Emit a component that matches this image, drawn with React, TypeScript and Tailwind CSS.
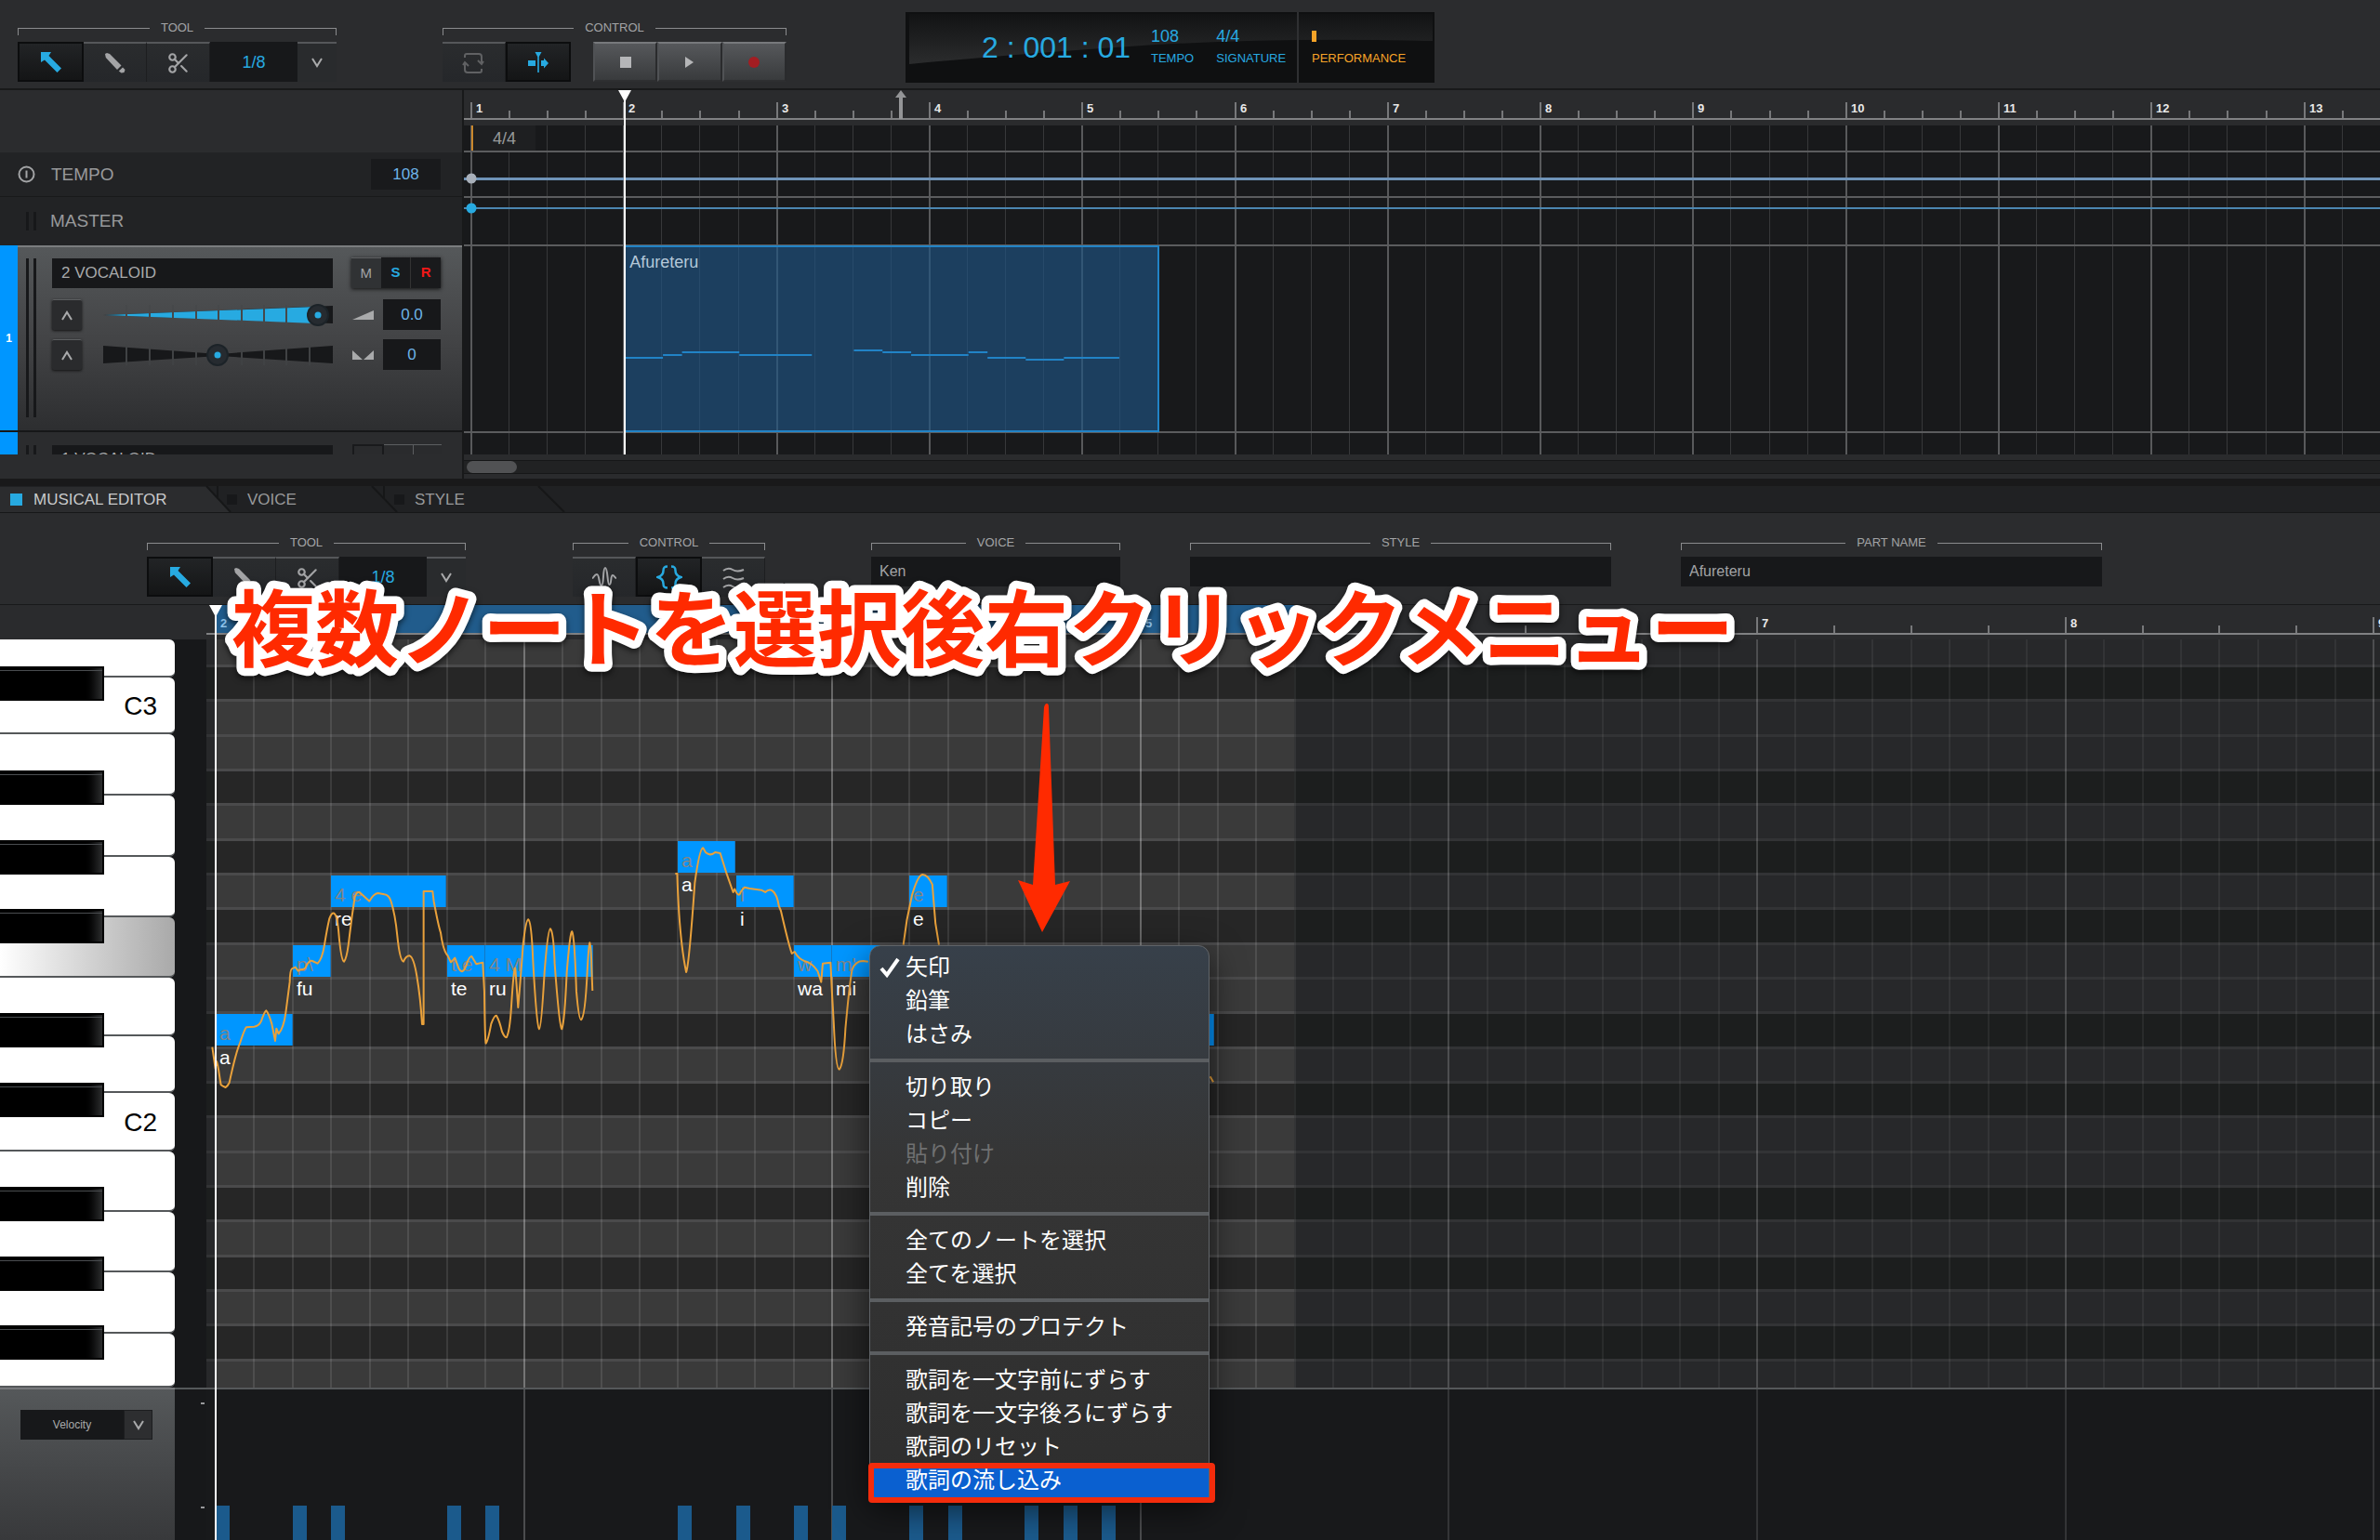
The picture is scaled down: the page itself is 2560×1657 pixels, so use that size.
import { ReactNode } from 'react';
import { Scissors } from 'lucide-react';

const BAR = 164.3;
const EIGHTH = 41.45;
const ROW = 112 / 3;
const ROLL_TOP = 29;
const BLACK_ROWS = [0, 3, 5, 7, 10, 12, 15, 17, 19];

const ROW_INDEXES = Array.from({ length: 22 }, (_, i) => i - 1);

interface Note {
    start: number;
    length: number;
    row: number;
    lyric: string;
    phoneme: string;
}

const notes: Note[] = [
    { start: 0, length: 2, row: 10, lyric: 'a', phoneme: 'a' },
    { start: 2, length: 1, row: 8, lyric: 'fu', phoneme: 'p\\' },
    { start: 3, length: 3, row: 6, lyric: 're', phoneme: '4 e' },
    { start: 6, length: 1, row: 8, lyric: 'te', phoneme: 't e' },
    { start: 7, length: 2.8, row: 8, lyric: 'ru', phoneme: '4 M' },
    { start: 12, length: 1.5, row: 5, lyric: 'a', phoneme: 'a' },
    { start: 13.5, length: 1.5, row: 6, lyric: 'i', phoneme: 'i' },
    { start: 15, length: 1, row: 8, lyric: 'wa', phoneme: 'w' },
    { start: 16, length: 2, row: 8, lyric: 'mi', phoneme: "m'" },
    { start: 18, length: 1, row: 6, lyric: 'e', phoneme: 'e' },
    { start: 23, length: 2.93, row: 10, lyric: '', phoneme: '' },
];

const velocities = [0, 2, 3, 6, 7, 12, 13.5, 15, 16, 18, 19, 21, 22, 23];

// start, end (eighths), y inside the part
const partNotes = [
    [0, 2, 121],
    [2, 3, 118],
    [3, 6, 115],
    [6, 9.8, 118],
    [12, 13.5, 113],
    [13.5, 15, 115],
    [15, 18, 118],
    [18, 19, 115],
    [19, 21, 121],
    [21, 23, 123],
    [23, 25.9, 121],
];

const whiteKeys = [
    { name: 'D3', height: 41 },
    { name: 'C3', height: 61 },
    { name: 'B2', height: 66 },
    { name: 'A2', height: 66 },
    { name: 'G2', height: 65 },
    { name: 'F2', height: 65 },
    { name: 'E2', height: 63 },
    { name: 'D2', height: 61 },
    { name: 'C2', height: 63 },
    { name: 'B1', height: 65 },
    { name: 'A1', height: 65 },
    { name: 'G1', height: 66 },
    { name: 'F1', height: 58 },
];

const menuGroups = [
    ['矢印', '鉛筆', 'はさみ'],
    ['切り取り', 'コピー', '貼り付け', '削除'],
    ['全てのノートを選択', '全てを選択'],
    ['発音記号のプロテクト'],
    [
        '歌詞を一文字前にずらす',
        '歌詞を一文字後ろにずらす',
        '歌詞のリセット',
        '歌詞の流し込み',
    ],
];

/* ---------- icons ---------- */

function ArrowIcon() {
    return (
        <svg width="22" height="22" viewBox="0 0 22 22" fill="#27aae1">
            <path d="M0 0H11L8.5 4L22 17.5L17.500 22L4 8.500L0 11Z" />
        </svg>
    );
}

function PencilIcon() {
    return (
        <svg width="22" height="22" viewBox="0 0 22 22" fill="#a3a4a6">
            <path d="M0 1L2 0L5 1L17.500 13.500L13 18L.8 5Z" />
            <path d="M19 15.500L21.500 18L20.500 21L17.500 21.500L14.800 19.500Z" />
        </svg>
    );
}

function LoopIcon() {
    return (
        <svg width="24" height="24" viewBox="0 0 24 24" fill="none" stroke="#606163" strokeWidth="2">
            <path d="M3 6V4Q3 2 5 2H18Q21 2 21 5V12" />
            <path d="M21 18V20Q21 22 19 22H6Q3 22 3 19V12" />
            <path d="M17 9L21 13L23 10M1 14L3 11L7 15" />
        </svg>
    );
}

function FollowIcon() {
    return (
        <svg width="24" height="24" viewBox="0 0 24 24" fill="#27aae1">
            <path d="M8.500 1H15.500L12.800 6V23H11.200V6Z" />
            <path d="M1 10H9V16H1ZM15 10H18V7.500L23 13L18 18.500V16H15Z" />
        </svg>
    );
}

function WaveIcon() {
    return (
        <svg width="26" height="24" viewBox="0 0 26 24" fill="none" stroke="#a3a4a6" strokeWidth="2">
            <path d="M0 12C2 12 2 8 5 8C8 8 7 20 10 20C13 20 11 1 14 1C17 1 16 19 18.500 19C21 19 19.500 9 22 9C24 9 24 12 26 12" />
        </svg>
    );
}

function BracesIcon() {
    return (
        <svg width="28" height="26" viewBox="0 0 28 26" fill="none" stroke="#27aae1" strokeWidth="2.500">
            <path d="M12 1.500C8 1.500 7.500 3 7.500 6C7.500 10 5 12 1.500 13C5 14 7.500 16 7.500 20C7.500 23 8 24.500 12 24.500" />
            <path d="M16 1.500C20 1.500 20.500 3 20.500 6C20.500 10 23 12 26.500 13C23 14 20.500 16 20.500 20C20.500 23 20 24.500 16 24.500" />
        </svg>
    );
}

function WavesIcon() {
    return (
        <svg width="24" height="24" viewBox="0 0 24 24" fill="none" stroke="#a3a4a6" strokeWidth="2">
            <path d="M1 4Q6 0 11 3T23 3M1 13Q6 9 11 12T23 12M1 22Q6 18 11 21T23 21" />
        </svg>
    );
}

function Chevron({ up = false }: { up?: boolean }) {
    return (
        <svg width="12" height="11" viewBox="0 0 12 11" fill="none" stroke="#a9aaab" strokeWidth="2">
            <path d={up ? 'M1 10L6 2L11 10' : 'M1 1L6 9L11 1'} />
        </svg>
    );
}

/* ---------- toolbar pieces ---------- */

function Group({ label, className, children }: { label: string; className: string; children: ReactNode }) {
    return (
        <section className={className} aria-label={label}>
            <div className="flex h-[18px] items-center gap-3">
                <div className="mt-2 h-2 flex-1 border-t border-l border-[#8a8b8d]" />
                <span className="text-[13px] leading-[18px] text-[#a3a4a6]">{label}</span>
                <div className="mt-2 h-2 flex-1 border-t border-r border-[#8a8b8d]" />
            </div>
            <div className="mt-[6px] flex">{children}</div>
        </section>
    );
}

function ToolButton({ label, active = false, children }: { label: string; active?: boolean; children: ReactNode }) {
    return (
        <button
            aria-label={label}
            className={
                active
                    ? 'flex h-[43px] flex-1 items-center justify-center border-2 border-[#0c0d0e] bg-linear-to-b from-[#222426] to-[#141516]'
                    : 'flex h-[43px] flex-1 items-center justify-center border-t-2 border-r border-t-[#55575a] border-r-[#1d1e20] bg-linear-to-b from-[#2a2c2e] to-[#25272a]'
            }
        >
            {children}
        </button>
    );
}

function TransportButton({ label, children }: { label: string; children: ReactNode }) {
    return (
        <button
            aria-label={label}
            className="flex h-[43px] flex-1 items-center justify-center border-2 border-t-[#77797c] border-r-[#2a2b2d] border-b-[#2e2f31] border-l-[#505255] bg-linear-to-b from-[#56585b] to-[#393b3d]"
        >
            {children}
        </button>
    );
}

function ToolGroup() {
    return (
        <Group label="TOOL" className="w-[343px]">
            <div className="flex w-[207px]">
                <ToolButton label="Arrow" active>
                    <ArrowIcon />
                </ToolButton>
                <ToolButton label="Pencil">
                    <PencilIcon />
                </ToolButton>
                <ToolButton label="Scissors">
                    <Scissors size={26} color="#a3a4a6" />
                </ToolButton>
            </div>
            <label className="relative flex h-[43px] flex-1">
                <select
                    aria-label="Quantize"
                    className="w-full appearance-none bg-[#17181a] pr-[42px] text-lg text-[#27aae1] [text-align-last:center]"
                >
                    <option>1/8</option>
                </select>
                <span className="pointer-events-none absolute inset-y-0 right-0 flex w-[42px] items-center justify-center border-t-2 border-[#55575a] bg-[#292b2d]">
                    <Chevron />
                </span>
            </label>
        </Group>
    );
}

function FieldGroup({ label, value, className }: { label: string; value: string; className: string }) {
    return (
        <Group label={label} className={className}>
            <input
                aria-label={label}
                defaultValue={value}
                className="h-8 w-full bg-[#17181a] px-[9px] text-base text-[#a3a4a6]"
            />
        </Group>
    );
}

function Lcd() {
    return (
        <div className="relative mt-[-8px] flex h-[76px] w-[569px] overflow-hidden bg-[#0f1011] text-[#27aae1]">
            <svg className="absolute inset-0 h-full w-full" viewBox="0 0 569 76" preserveAspectRatio="none">
                <defs>
                    <linearGradient id="gloss" x1="0" y1="0" x2="0" y2="1">
                        <stop offset="0" stopColor="#121314" />
                        <stop offset="1" stopColor="#2b2c2d" />
                    </linearGradient>
                </defs>
                <path d="M4 2H567V31Q380 27 240 37Q120 45 4 56Z" fill="url(#gloss)" />
            </svg>
            <div className="relative flex w-[423px] items-center border-r-2 border-[#2f3032] pl-[82px]">
                <span className="w-[182px] shrink-0 text-[32px] leading-9 whitespace-nowrap">2 : 001 : 01</span>
                <dl className="flex gap-6 text-[13px] leading-6">
                    <div className="flex flex-col-reverse">
                        <dt>TEMPO</dt>
                        <dd className="text-lg leading-6">108</dd>
                    </div>
                    <div className="flex flex-col-reverse">
                        <dt>SIGNATURE</dt>
                        <dd className="text-lg leading-6">4/4</dd>
                    </div>
                </dl>
            </div>
            <div className="relative flex flex-col justify-center pl-[14px] text-[#f7a428]">
                <div className="my-[6px] h-3 w-[5px] bg-[#f7a428]" />
                <span className="text-[13px] leading-6">PERFORMANCE</span>
            </div>
        </div>
    );
}

/* ---------- timelines ---------- */

interface RulerProps {
    offset: number;
    bar: number;
    first: number;
    count: number;
    part?: { from: number; to: number };
}

function Ruler({ offset, bar, first, count, part }: RulerProps) {
    return (
        <div className="relative h-[38px] overflow-hidden bg-[#2a2b2d]">
            {part && (
                <div
                    className="absolute top-0 h-[31px] bg-[#215c8c]"
                    style={{ left: part.from, width: part.to - part.from }}
                />
            )}
            <svg className="absolute inset-0 h-full w-full">
                {Array.from({ length: count * 4 }, (_, i) => {
                    const x = Math.round(offset + (i * bar) / 4);
                    const top = i % 4 === 0 ? 13 : 22;
                    const hidden = part && x < part.to && i % 4 !== 0;
                    return hidden ? null : (
                        <rect key={i} x={x - 1} y={top} width="2" height={31 - top} fill="#77787a" />
                    );
                })}
                <rect x="0" y="30" width="100%" height="2" fill="#808183" />
            </svg>
            {Array.from({ length: count }, (_, i) => {
                const x = Math.round(offset + i * bar);
                return (
                    <span
                        key={i}
                        className={
                            part && x < part.to
                                ? 'absolute top-3 text-[13px] leading-4 font-bold text-[#8fc3ea]'
                                : 'absolute top-3 text-[13px] leading-4 font-bold text-[#e8e8e8]'
                        }
                        style={{ left: x + 5 }}
                    >
                        {first + i}
                    </span>
                );
            })}
        </div>
    );
}

function Playhead({ left }: { left: number }) {
    return (
        <div className="pointer-events-none absolute inset-y-0 w-4" style={{ left }}>
            <svg width="16" height="18" viewBox="0 0 16 18" fill="#fff" className="absolute top-0 left-0">
                <path d="M1 0H15L9 11V18H7V11Z" />
            </svg>
            <div className="mx-auto h-full w-[2px] bg-white" />
        </div>
    );
}

function Arrangement() {
    return (
        <div className="relative min-w-0 flex-1 border-l-2 border-[#18191a]">
            <div className="relative">
                <Ruler offset={8} bar={BAR} first={1} count={13} />
                <svg className="absolute top-0 left-[464px]" width="12" height="31" viewBox="0 0 12 31" fill="#949597">
                    <path d="M6 0L12 8H8V31H4V8H0Z" />
                </svg>
                <div className="relative h-[354px] overflow-hidden bg-[#18191b]">
                    <svg className="absolute inset-0 h-full w-full">
                        {Array.from({ length: 53 }, (_, i) => (
                            <rect
                                key={i}
                                x={Math.round(7 + (i * BAR) / 4)}
                                y="0"
                                width={i % 4 === 0 ? 2 : 1}
                                height="100%"
                                fill={i % 4 === 0 ? '#58595b' : '#37383a'}
                            />
                        ))}
                        {[27, 76, 128, 329].map((y) => (
                            <rect key={y} x="0" y={y} width="100%" height="2" fill="#5b5c5e" />
                        ))}
                        <rect x="0" y="56" width="100%" height="3" fill="#6f93b8" />
                        <rect x="0" y="88" width="100%" height="2" fill="#4b86b0" />
                        <rect x="8" y="0" width="2" height="27" fill="#c8862b" />
                        <circle cx="8" cy="57" r="5.500" fill="#a9b0ba" />
                        <circle cx="8" cy="89" r="5.500" fill="#27aae1" />
                    </svg>
                    <span className="absolute top-0 left-[11px] flex h-[27px] w-[66px] items-center bg-[#1e1f21] pl-5 text-lg leading-6 text-[#98999b]">
                        4/4
                    </span>
                    <div
                        className="absolute top-[129px] h-[201px] overflow-hidden border-2 border-l-0 border-[#2183c6] bg-[#1e5584]/65"
                        style={{ left: 9 + BAR, width: 3.5 * BAR }}
                    >
                        <span className="block px-[5px] pt-1 text-lg leading-6 text-[#b4c8d9]">Afureteru</span>
                        <svg className="absolute inset-0 h-full w-full">
                            {partNotes.map(([from, to, y]) => (
                                <rect
                                    key={from}
                                    x={(from * BAR) / 8}
                                    y={y - 3}
                                    width={((to - from) * BAR) / 8}
                                    height="2"
                                    fill="#2183c6"
                                />
                            ))}
                        </svg>
                    </div>
                </div>
                <Playhead left={165} />
            </div>
            <div className="h-[26px] bg-[#2a2b2d] pt-[6px]">
                <div className="h-[15px] border-y border-[#161718] bg-[#212223] px-[3px]">
                    <div className="h-[13px] w-[54px] rounded-full bg-[#515254]" />
                </div>
            </div>
        </div>
    );
}

/* ---------- track list ---------- */

function VolumeSlider() {
    return (
        <div className="relative h-8 w-[248px]">
            <svg width="248" height="32" viewBox="0 0 248 32">
                <path d="M0 16L247 6V25Z" fill="#17181a" />
                <path d="M2 16L228 7V25Z" fill="#27aae1" />
                {[24, 49, 74, 99, 123, 148, 172, 196].map((x) => (
                    <rect key={x} x={x} y="5" width="2" height="22" fill="#46484a" />
                ))}
                <circle cx="231" cy="16" r="12" fill="#1c2328" />
                <circle cx="231" cy="16" r="10" fill="#262b30" />
                <circle cx="231" cy="16" r="3.500" fill="#27aae1" />
            </svg>
            <input type="range" aria-label="Volume" defaultValue={93} className="absolute inset-0 w-full opacity-0" />
        </div>
    );
}

function PanSlider() {
    return (
        <div className="relative h-8 w-[248px]">
            <svg width="248" height="32" viewBox="0 0 248 32">
                <path d="M0 6L124 15L247 6V25L124 17L0 25Z" fill="#17181a" />
                {[24, 49, 74, 99, 148, 172, 196, 221].map((x) => (
                    <rect key={x} x={x} y="5" width="2" height="22" fill="#404244" />
                ))}
                <circle cx="123" cy="16" r="12" fill="#1c2328" />
                <circle cx="123" cy="16" r="10" fill="#262b30" />
                <circle cx="123" cy="16" r="3.500" fill="#27aae1" />
            </svg>
            <input type="range" aria-label="Pan" className="absolute inset-0 w-full opacity-0" />
        </div>
    );
}

function ExpandButton({ label }: { label: string }) {
    return (
        <button
            aria-label={label}
            className="flex h-[33px] w-8 items-center justify-center rounded-xs border-t border-[#5c5e60] bg-[#2a2b2d] shadow-[0_1px_3px_#111]"
        >
            <Chevron up />
        </button>
    );
}

function ValueBox({ label, value }: { label: string; value: string }) {
    return (
        <input
            aria-label={label}
            defaultValue={value}
            className="h-[33px] w-[62px] bg-[#17181a] text-center text-[17px] text-[#6db3e8]"
        />
    );
}

function Meter({ className }: { className: string }) {
    return (
        <div className={className}>
            <div className="w-[3px] bg-[#17181a]" />
            <div className="w-[3px] bg-[#17181a]" />
        </div>
    );
}

function TrackList() {
    return (
        <div className="flex w-[497px] shrink-0 flex-col">
            <div className="h-[67px]" />
            <div className="flex h-12 items-center border-b border-[#18191a] bg-[#222325] pr-[23px] pl-[19px]">
                <svg width="19" height="19" viewBox="0 0 19 19" fill="none" stroke="#a3a4a6" strokeWidth="2">
                    <circle cx="9.500" cy="9.500" r="8" />
                    <path d="M9.500 5.500V13.500" />
                </svg>
                <span className="ml-[17px] flex-1 text-[19px] leading-6 text-[#98999b]">TEMPO</span>
                <input
                    aria-label="Tempo"
                    defaultValue="108"
                    className="h-[33px] w-[75px] bg-[#191a1c] text-center text-[17px] text-[#6db3e8]"
                />
            </div>
            <div className="flex h-[52px] items-center gap-[15px] bg-[#222325] pl-[28px]">
                <Meter className="flex h-5 w-[11px] gap-[5px]" />
                <span className="text-[19px] leading-6 text-[#98999b]">MASTER</span>
            </div>
            <div className="flex h-[201px] border-b-2 border-[#161718]">
                <div className="flex w-[19px] items-center justify-center bg-[#0096ff] text-xs font-bold text-white">
                    1
                </div>
                <div className="flex flex-1 border-t-2 border-[#7b7d7f] bg-linear-to-b from-[#55585a] via-[#434446] to-[#2d2e30] pr-[23px] pl-[9px]">
                    <Meter className="mt-3 flex h-[171px] w-[11px] gap-[5px]" />
                    <div className="ml-[17px] flex flex-1 flex-col pt-[11px]">
                        <div className="flex h-[33px] items-center justify-between">
                            <input
                                aria-label="Track name"
                                defaultValue="2 VOCALOID"
                                className="h-8 w-[302px] bg-[#17181a] px-[10px] text-[17px] text-[#a9aaab]"
                            />
                            <div className="flex h-[33px] w-[96px] text-[15px] shadow-[0_1px_4px_#111]">
                                <button className="flex-1 border-t border-[#5c5e60] bg-[#303234] text-[#a3a4a6]">
                                    M
                                </button>
                                <button className="flex-1 border-r border-[#333] bg-[#191a1c] font-bold text-[#27aae1]">
                                    S
                                </button>
                                <button className="flex-1 bg-[#191a1c] font-bold text-[#f01818]">R</button>
                            </div>
                        </div>
                        <div className="mt-3 flex h-[33px] items-center">
                            <ExpandButton label="Show volume" />
                            <div className="ml-[23px]">
                                <VolumeSlider />
                            </div>
                            <svg className="ml-5" width="23" height="10" viewBox="0 0 23 10" fill="#a9aaab">
                                <path d="M0 10L23 0V10Z" />
                            </svg>
                            <div className="ml-auto">
                                <ValueBox label="Volume value" value="0.0" />
                            </div>
                        </div>
                        <div className="mt-[10px] flex h-[33px] items-center">
                            <ExpandButton label="Show pan" />
                            <div className="ml-[23px]">
                                <PanSlider />
                            </div>
                            <svg className="ml-5" width="23" height="10" viewBox="0 0 23 10" fill="#a9aaab">
                                <path d="M0 0L11 10H0ZM23 0L12 10H23Z" />
                            </svg>
                            <div className="ml-auto">
                                <ValueBox label="Pan value" value="0" />
                            </div>
                        </div>
                    </div>
                </div>
            </div>
            <div className="flex h-6 overflow-hidden">
                <div className="w-[19px] bg-[#0096ff]" />
                <Meter className="mt-[14px] ml-[9px] flex h-[10px] w-[11px] gap-[5px]" />
                <div className="mt-[14px] ml-[17px] h-8 w-[302px] bg-[#17181a] px-[10px] pt-[5px] text-[17px] leading-5 text-[#a9aaab]">
                    1 VOCALOID
                </div>
                <div className="mt-[13px] ml-[21px] flex h-8 w-[96px]">
                    <div className="flex-1 border-2 border-[#191a1c] bg-[#2a2b2d]" />
                    <div className="flex-1 border-t border-r border-[#5c5e60] bg-[#2a2b2d]" />
                    <div className="flex-1 border-t border-[#5c5e60] bg-[#2a2b2d]" />
                </div>
            </div>
            <div className="flex-1" />
        </div>
    );
}

/* ---------- musical editor ---------- */

function EditorTabs() {
    return (
        <div className="border-t-8 border-[#19191a] bg-[#202123]">
            <nav className="relative flex h-[29px] border-b border-[#161718] pt-px text-[17px] text-[#98999b]">
                <button className="flex w-[248px] items-center gap-3 bg-[#2b2c2e] pl-[11px] text-[#c9cacb] [clip-path:polygon(0_0,calc(100%-26px)_0,100%_100%,0_100%)]">
                    <span className="h-[13px] w-[13px] bg-[#27aae1]" />
                    MUSICAL EDITOR
                </button>
                <button className="-ml-[26px] flex w-[205px] items-center gap-[11px] pl-[22px]">
                    <span className="h-[11px] w-[11px] bg-[#17181a]" />
                    VOICE
                </button>
                <button className="-ml-[26px] flex w-[206px] items-center gap-[11px] pl-[23px]">
                    <span className="h-[11px] w-[11px] bg-[#17181a]" />
                    STYLE
                </button>
                <svg
                    className="pointer-events-none absolute inset-0"
                    width="620"
                    height="28"
                    fill="none"
                    stroke="#161718"
                    strokeWidth="2"
                >
                    <path d="M222 0L248 28M234 0V14M400 0L427 28M413 0V14M579 0L607 28" />
                </svg>
            </nav>
        </div>
    );
}

function Piano() {
    return (
        <div className="relative h-[805px] overflow-hidden bg-[#18191b]">
            {whiteKeys.map((key) => (
                <button
                    key={key.name}
                    aria-label={key.name}
                    className={
                        key.name === 'F2'
                            ? 'flex w-full rounded-r-md border-b-2 border-[#55585a] bg-linear-to-r from-white to-[#a9a9a9]'
                            : 'flex w-full items-center justify-end rounded-r-md border-b-2 border-[#55585a] bg-white pt-[2px] pr-[19px] text-[28px] text-black'
                    }
                    style={{ height: key.height }}
                >
                    {key.name.startsWith('C') && key.name}
                </button>
            ))}
            {BLACK_ROWS.map((row) => (
                <div
                    key={row}
                    className="absolute left-0 h-[37px] w-28 border-2 border-l-0 border-black bg-linear-to-r from-black from-80% to-[#2c2d2e]"
                    style={{ top: Math.round(ROLL_TOP + row * ROW) }}
                >
                    <div className="mt-[2px] h-px bg-[#4a4d50]" />
                </div>
            ))}
        </div>
    );
}

function RollRows({ x, width, light, dark, line }: { x: number; width: string; light: string; dark: string; line: string }) {
    return (
        <>
            {ROW_INDEXES.map((row) => {
                const y = Math.round(ROLL_TOP + row * ROW);
                return (
                    <g key={row}>
                        <rect x={x} y={y} width={width} height="38" fill={BLACK_ROWS.includes(row) ? dark : light} />
                        <rect x={x} y={y - 2} width={width} height="3" fill={line} />
                    </g>
                );
            })}
        </>
    );
}

function PitchCurve() {
    return (
        <g fill="none" stroke="#e9a13b" strokeWidth="2" strokeLinejoin="round">
            <g transform="translate(-22 172) scale(.3333 .3333)">
                <path
                    vectorEffect="non-scaling-stroke"
                    d="M85 800L95 870L98 845C105 855 108 900 113 922Q118 926 128 930Q135 925 140 915C150 870 160 820 175 785C185 755 190 740 195 736Q205 735 220 734Q236 732 243 716C250 695 254 685 259 682C266 690 270 700 277 725L288 780L292 740L299 757Q315 740 322 690L335 590Q336 550 342 547L353 542L362 554Q370 548 377 549Q385 548 390 535Q400 518 408 522L425 530Q440 515 447 470Q455 420 463 385Q470 365 478 368Q488 375 492 420Q500 520 510 524Q520 515 528 440Q535 380 545 315Q550 298 560 300Q580 318 592 329Q605 305 620 303L640 307Q655 308 662 330Q675 370 682 440Q690 520 702 524Q710 505 722 505Q735 510 745 570Q757 640 762 726L767 726L767 297L796 297L800 330Q815 410 822 430Q830 490 845 505L855 526L868 512L880 545Q892 570 905 535Q915 505 922 507L937 532L958 527L963 620Q965 780 968 788Q975 780 985 725Q995 697 1002 698Q1012 715 1020 750Q1030 772 1035 768Q1045 750 1050 670Q1058 540 1063 545L1072 672Q1080 580 1088 470Q1097 390 1105 388Q1115 395 1120 520Q1132 735 1140 742Q1147 740 1157 560Q1168 420 1176 418Q1186 425 1190 530Q1205 735 1213 742Q1222 720 1229 560Q1240 425 1246 427Q1254 440 1260 620Q1268 712 1275 712Q1288 705 1295 560Q1300 465 1303 463Q1308 480 1309 540L1312 618"
                />
            </g>
            <g transform="translate(458 172) scale(.4209 .3333)">
                <path
                    vectorEffect="non-scaling-stroke"
                    d="M110 240L115 240Q120 450 138 558Q145 540 160 270Q172 160 181 157L188 172Q200 185 212 171L225 174L240 235L258 300L262 290Q272 320 277 300L287 284L300 288L330 293L340 300Q350 288 358 295Q370 305 375 345L380 360Q400 470 408 498L415 492Q425 515 440 522Q460 528 474 555L483 590L487 530L507 527Q510 620 515 720Q520 870 529 872Q540 860 545 740Q555 600 562 550Q570 522 590 522L603 524M693 470Q700 390 715 310Q730 245 742 243Q755 243 767 275L775 400L784 470M1477 895L1485 913"
                />
            </g>
        </g>
    );
}

function PianoRoll() {
    return (
        <div className="relative h-[805px] overflow-hidden">
            <svg className="absolute inset-0 h-full w-full">
                <RollRows x={0} width="100%" light="#27282a" dark="#1c1e1e" line="#323335" />
                <RollRows x={9} width="1161" light="#3a3a3a" dark="#262626" line="#4a4a4b" />
                {Array.from({ length: 57 }, (_, i) => (
                    <rect
                        key={i}
                        x={Math.round(9 + i * EIGHTH)}
                        y="0"
                        width="2"
                        height="100%"
                        fill="#fff"
                        opacity={i % 8 === 0 ? (i < 28 ? 0.3 : 0.18) : i < 28 ? 0.1 : 0.06}
                    />
                ))}
            </svg>
            {notes.map((note) => (
                <div
                    key={note.start}
                    className="absolute h-[34px] border-r border-[#1478c4] bg-[#0096ff] pt-[9px] pl-1 text-[21px] leading-6 whitespace-nowrap text-[#858585]"
                    style={{
                        left: Math.round(10 + note.start * EIGHTH),
                        top: Math.round(ROLL_TOP + note.row * ROW) + 1,
                        width: Math.round(note.length * EIGHTH),
                    }}
                >
                    {note.phoneme}
                </div>
            ))}
            {notes.map((note) => (
                <span
                    key={note.start}
                    className="absolute text-[21px] leading-6 text-white"
                    style={{
                        left: Math.round(14 + note.start * EIGHTH),
                        top: Math.round(ROLL_TOP + note.row * ROW) + 36,
                    }}
                >
                    {note.lyric}
                </span>
            ))}
            <svg className="absolute inset-0 h-full w-full">
                <PitchCurve />
            </svg>
        </div>
    );
}

function VelocityLane() {
    return (
        <div className="relative min-h-[164px] flex-1 overflow-hidden border-t-2 border-[#55585a] bg-[#18191b]">
            <svg className="absolute inset-0 h-full w-full">
                {Array.from({ length: 8 }, (_, i) => (
                    <rect
                        key={i}
                        x={Math.round(9 + i * 8 * EIGHTH)}
                        y="0"
                        width="2"
                        height="100%"
                        fill={i < 4 ? '#4b4c4e' : '#333436'}
                    />
                ))}
                {velocities.map((start) => (
                    <rect key={start} x={Math.round(10 + start * EIGHTH)} y="125" width="15" height="100%" fill="#1b5a8c" />
                ))}
            </svg>
        </div>
    );
}

function EditorBody() {
    return (
        <div className="flex flex-1 border-t border-[#19191a]">
            <div className="flex w-[188px] shrink-0 flex-col">
                <div className="h-[37px] bg-[#2a2b2d]" />
                <Piano />
                <div className="flex-1 border-t-2 border-[#77797c] bg-linear-to-b from-[#55585a] to-[#38393b] px-[22px] pt-[22px]">
                    <label className="relative flex h-8 w-[142px]">
                        <select
                            aria-label="Parameter"
                            className="w-full appearance-none bg-[#17181a] pr-[31px] text-xs text-[#a9aaab] [text-align-last:center]"
                        >
                            <option>Velocity</option>
                        </select>
                        <span className="pointer-events-none absolute inset-y-0 right-0 flex w-[31px] items-center justify-center border border-[#1c1d1f] bg-[#2d2e30]">
                            <Chevron />
                        </span>
                    </label>
                </div>
            </div>
            <div className="flex w-[34px] shrink-0 flex-col bg-[#17181a]">
                <div className="h-[37px] bg-[#2a2b2d]" />
                <div className="h-[805px]" />
                <div className="flex h-[130px] flex-col items-end justify-between border-t-2 border-[#55585a] pt-[14px] pr-[2px]">
                    <div className="h-[2px] w-1 bg-[#98999b]" />
                    <div className="h-[2px] w-1 bg-[#98999b]" />
                </div>
            </div>
            <div className="relative flex min-w-0 flex-1 flex-col">
                <div className="h-[37px] overflow-hidden">
                    <Ruler offset={10} bar={EIGHTH * 8} first={2} count={8} part={{ from: 10, to: 1170 }} />
                </div>
                <PianoRoll />
                <VelocityLane />
                <Playhead left={2} />
            </div>
        </div>
    );
}

function ContextMenu() {
    return (
        <div
            role="menu"
            className="absolute top-[1017px] left-[935px] w-[366px] rounded-t-xl border border-[#606468] bg-linear-to-b from-[#37404a] via-[#353535] via-40% to-[#2e2e2e] pt-[5px] shadow-[0_12px_36px_rgba(0,0,0,0.6)]"
        >
            {menuGroups.map((group, i) => (
                <div key={group[0]} className={i > 0 ? 'mt-2 border-t-4 border-[#5b5e61] pt-[9px]' : ''}>
                    {group.map((item) => (
                        <button
                            key={item}
                            role="menuitem"
                            disabled={item === '貼り付け'}
                            className={
                                item === '歌詞の流し込み'
                                    ? 'relative flex h-9 w-full items-center bg-[#0a60d0] pl-[38px] text-2xl leading-9 text-white'
                                    : 'relative flex h-9 w-full items-center pl-[38px] text-2xl leading-9 text-white disabled:text-[#6f7071]'
                            }
                        >
                            {item === '矢印' && (
                                <svg
                                    className="absolute left-[10px]"
                                    width="22"
                                    height="22"
                                    viewBox="0 0 22 22"
                                    fill="none"
                                    stroke="#fff"
                                    strokeWidth="4"
                                >
                                    <path d="M2 12L8 19L20 2" />
                                </svg>
                            )}
                            {item}
                        </button>
                    ))}
                </div>
            ))}
        </div>
    );
}

function Annotations() {
    return (
        <div className="pointer-events-none">
            <h1 className="absolute top-[600px] left-[240px] drop-shadow-[0_3px_3px_rgba(0,0,0,0.6)]">
                <svg width="1640" height="160">
                    <text
                        x="9"
                        y="110"
                        fontSize="90"
                        fontWeight="700"
                        fill="#ff2a00"
                        stroke="#fff"
                        strokeWidth="17"
                        strokeLinejoin="round"
                        paintOrder="stroke"
                    >
                        複数ノートを選択後右クリックメニュー
                    </text>
                </svg>
            </h1>
            <svg
                className="absolute top-[757px] left-[1094px]"
                width="58"
                height="248"
                viewBox="0 0 58 248"
                fill="#ff2a00"
            >
                <path d="M32 0Q34 0 34 4L41 195L57 191L27 246L1 190L17 195L29 4Q30 0 32 0Z" />
            </svg>
            <div className="absolute top-[1574px] left-[934px] h-[43px] w-[373px] rounded-sm border-[6px] border-[#f32c0c]" />
        </div>
    );
}

export default function App() {
    return (
        <div className="relative flex min-h-screen flex-col overflow-hidden bg-[#2b2c2e] font-['Liberation_Sans','Noto_Sans_CJK_JP',sans-serif]">
            <header className="flex h-[97px] border-b-2 border-[#18191a] pt-[21px] pl-[19px]">
                <ToolGroup />
                <Group label="CONTROL" className="ml-[114px] w-[370px]">
                    <div className="flex w-[138px]">
                        <ToolButton label="Loop">
                            <LoopIcon />
                        </ToolButton>
                        <ToolButton label="Auto scroll" active>
                            <FollowIcon />
                        </ToolButton>
                    </div>
                    <div className="ml-6 flex flex-1">
                        <TransportButton label="Stop">
                            <span className="h-3 w-3 bg-[#b5b6b8]" />
                        </TransportButton>
                        <TransportButton label="Play">
                            <svg width="9" height="12" viewBox="0 0 9 12" fill="#b5b6b8">
                                <path d="M0 0L9 6L0 12Z" />
                            </svg>
                        </TransportButton>
                        <TransportButton label="Record">
                            <span className="h-3 w-3 rounded-full bg-[#a31d22]" />
                        </TransportButton>
                    </div>
                </Group>
                <div className="ml-[128px]">
                    <Lcd />
                </div>
            </header>

            <main className="flex flex-1 flex-col">
                <div className="flex">
                    <TrackList />
                    <Arrangement />
                </div>
                <EditorTabs />
                <div className="flex h-[98px] pt-[23px] pl-[158px]">
                    <ToolGroup />
                    <Group label="CONTROL" className="ml-[115px] w-[207px]">
                        <ToolButton label="Pitch">
                            <WaveIcon />
                        </ToolButton>
                        <ToolButton label="Phonemes" active>
                            <BracesIcon />
                        </ToolButton>
                        <ToolButton label="Vibrato">
                            <WavesIcon />
                        </ToolButton>
                    </Group>
                    <FieldGroup label="VOICE" value="Ken" className="ml-[114px] w-[268px]" />
                    <FieldGroup label="STYLE" value="" className="ml-[75px] w-[453px]" />
                    <FieldGroup label="PART NAME" value="Afureteru" className="ml-[75px] w-[453px]" />
                </div>
                <EditorBody />
            </main>

            <ContextMenu />
            <Annotations />
        </div>
    );
}
